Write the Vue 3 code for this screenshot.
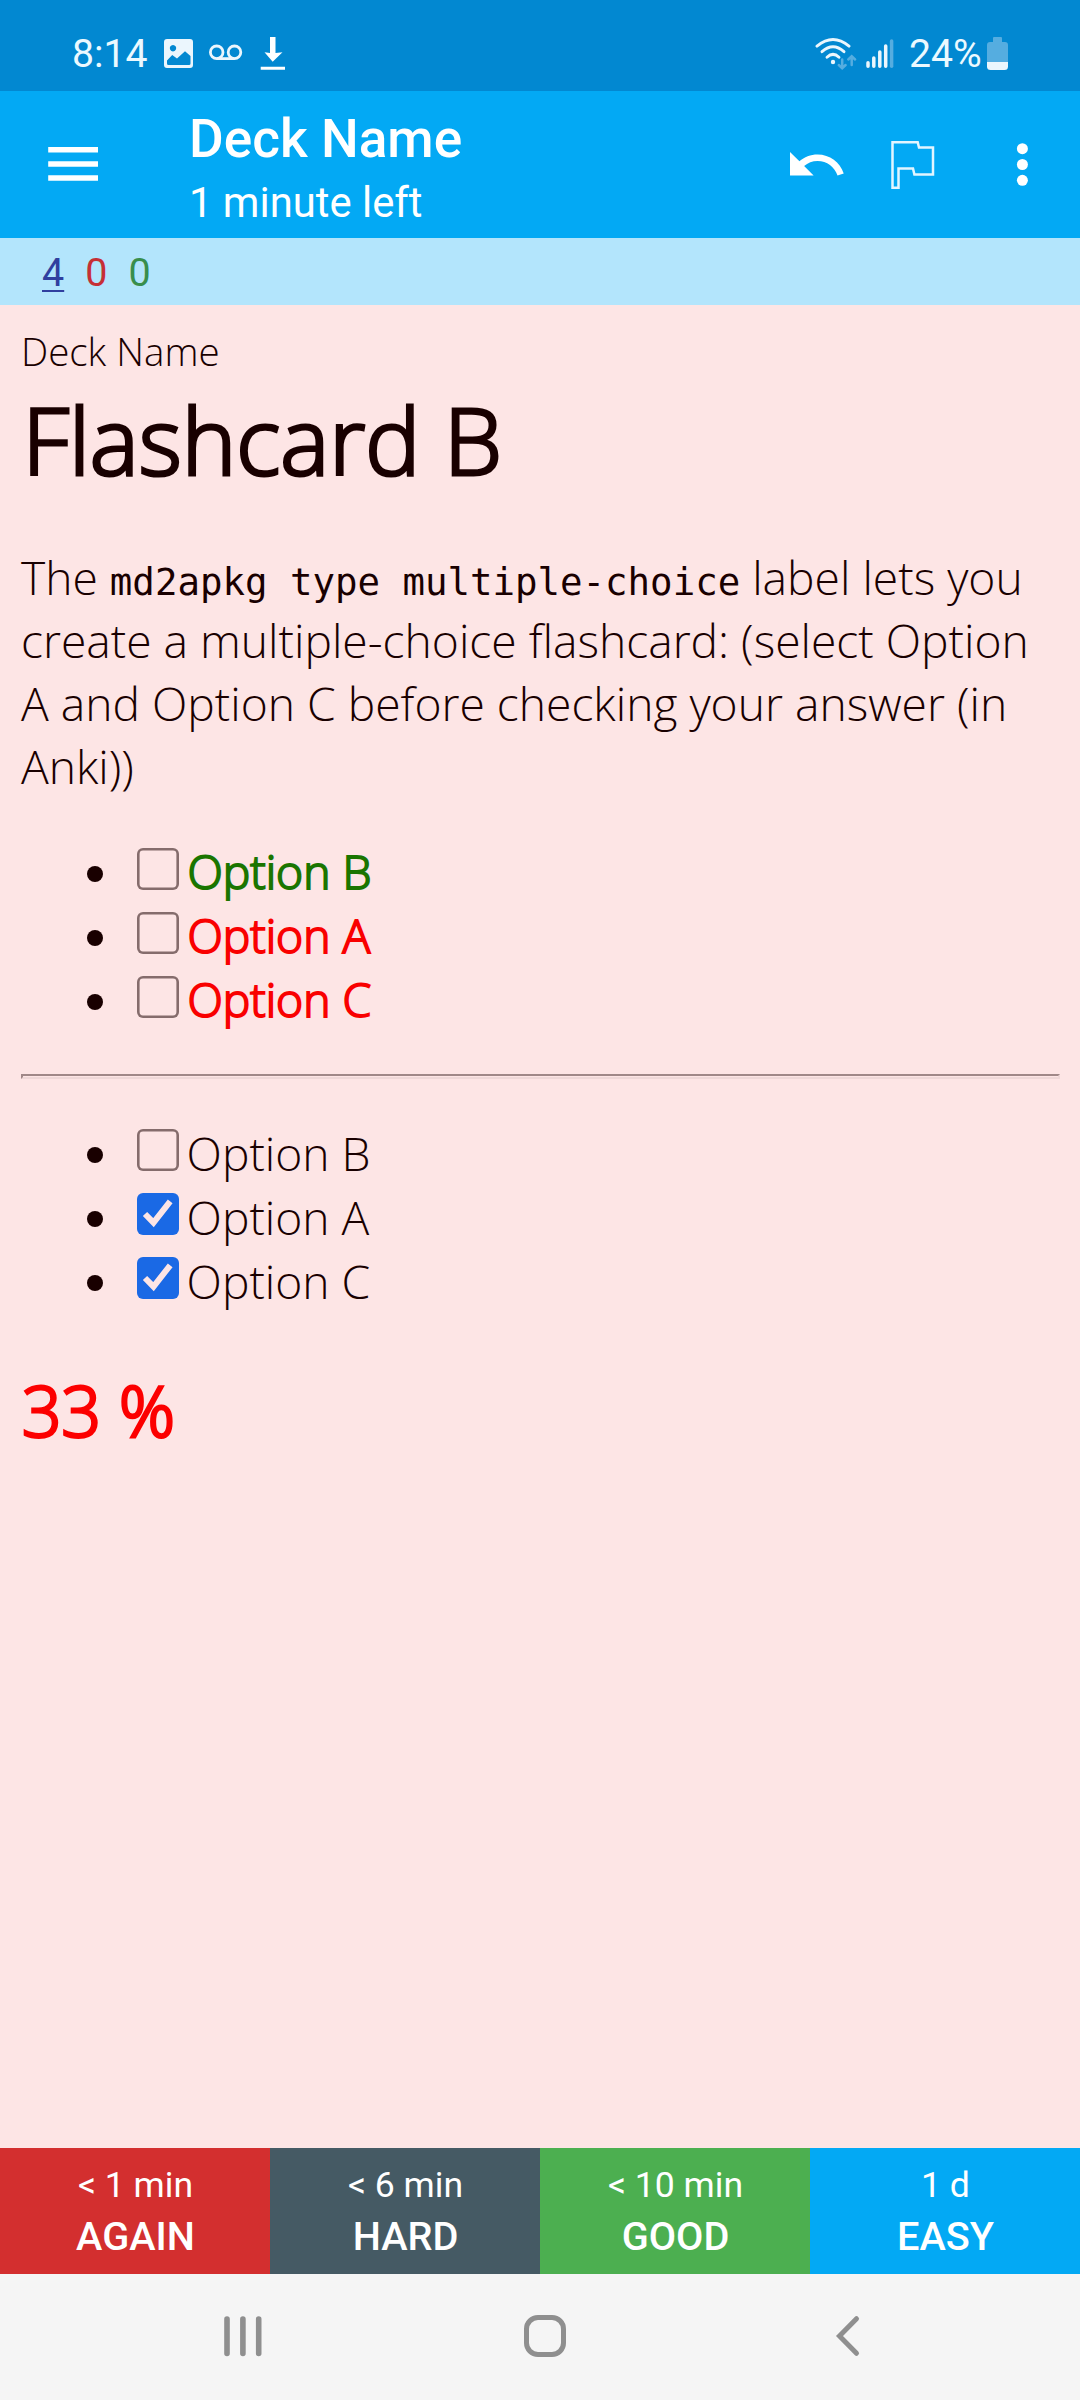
<script setup>
const counts = [
  { n: 4, kind: 'new' },
  { n: 0, kind: 'learn' },
  { n: 0, kind: 'review' },
]
const graded = [
  { text: 'Option B', kind: 'right' },
  { text: 'Option A', kind: 'wrong' },
  { text: 'Option C', kind: 'wrong' },
]
const chosen = [
  { text: 'Option B', checked: false },
  { text: 'Option A', checked: true },
  { text: 'Option C', checked: true },
]
const answers = [
  { time: '< 1 min', label: 'AGAIN', kind: 'again' },
  { time: '< 6 min', label: 'HARD', kind: 'hard' },
  { time: '< 10 min', label: 'GOOD', kind: 'good' },
  { time: '1 d', label: 'EASY', kind: 'easy' },
]
</script>

<template>
  <div class="screen">
    <header class="status">
      <span class="clock">8:14</span>
      <svg class="s-left" width="122" height="34" viewBox="163 38 122 34">
        <path fill-rule="evenodd" fill="#ebf6fd" d="M167 40h23a3 3 0 0 1 3 3v23a3 3 0 0 1-3 3h-23a3 3 0 0 1-3-3v-23a3 3 0 0 1 3-3zM173 46a3.2 3.2 0 1 0 .01 0zM167 61.500v3a1.500 1.500 0 0 0 1.500 1.500h20.500a1.500 1.500 0 0 0 1.500-1.500v-7.500l-5.500-4.800-8 7.300-4.800-3.600z" />
        <g fill="none" stroke="#ebf6fd" stroke-width="2.800">
          <circle cx="216.700" cy="53.300" r="6.300" />
          <circle cx="234.500" cy="53.300" r="6.300" />
          <path d="M216.700 59.600h17.800" />
        </g>
        <path fill="#fff" d="M270 38h5.500v16l7-.7-9.800 9.400-8.200-9.400 5.500.7zM260.700 67.700h24.500v3.100h-24.500z" />
      </svg>
      <svg class="s-right" width="79" height="34" viewBox="815 37 79 34">
        <g fill="none" stroke="#ebf6fd" stroke-width="2.900" stroke-linecap="round">
          <path d="M817 46.200Q833 33 849 46.200" />
          <path d="M822 51.700Q833 41.800 844 51.700" />
          <path d="M827 57.200Q833 51.500 839 57.200" />
        </g>
        <circle cx="833" cy="62" r="2.200" fill="#ebf6fd" />
        <g fill="none" stroke="#55ade0" stroke-width="2.500" stroke-linecap="round">
          <path d="M842.200 59.500v8.500M838.800 65l3.400 3.300 3.400-3.300M851.700 65v-8.500M848.300 59.500l3.400-3.300 3.400 3.300" />
        </g>
        <g stroke="#ebf6fd" stroke-width="3.500" stroke-linecap="round">
          <path d="M868 62.800v3.500M873.800 58v8.300M879.800 52v14.300M885.700 46v20.300" />
          <path stroke="#55ade0" d="M891.600 41v25.300" />
        </g>
      </svg>
      <span class="percent">24%</span>
      <svg class="batt" width="21" height="33" viewBox="987 37 21 33">
        <path fill="#55ade0" d="M994 37h7a1 1 0 0 1 1 1v4h3a3 3 0 0 1 3 3v17h-21v-17a3 3 0 0 1 3-3h3v-4a1 1 0 0 1 1-1z" />
        <path fill="#ebf6fd" d="M987 62h21v4.500a3.500 3.500 0 0 1-3.500 3.500h-14a3.500 3.500 0 0 1-3.500-3.500z" />
      </svg>
    </header>

    <div class="toolbar">
      <svg class="menu" width="50" height="37" viewBox="48 146 50 37">
        <path fill="#fff" d="M48.200 147h49.800v5.600h-49.800zM48.200 161.200h49.800v5.500h-49.800zM48.200 175.200h49.800v5.600h-49.800z" />
      </svg>
      <div class="titles">
        <div class="title">Deck Name</div>
        <div class="subtitle">1 minute left</div>
      </div>
      <svg class="actions" width="244" height="63" viewBox="785 133 244 63">
        <path fill="#fff" transform="translate(784.750 133.500) scale(2.625)" d="M12.500 8c-2.650 0-5.050.99-6.900 2.600L2 7v9h9l-3.620-3.620c1.390-1.160 3.160-1.880 5.120-1.880 3.540 0 6.550 2.310 7.600 5.500l2.370-.78C21.080 11.030 17.150 8 12.500 8z" />
        <path fill="none" stroke="#e2f5ff" stroke-width="2.500" d="M892.500 142.300h25.200l1.300 5.200h14v27h-18.600l-1.400-6h-14.500v19.300h-6z" />
        <g fill="#fff">
          <circle cx="1022.400" cy="148.700" r="5.500" />
          <circle cx="1022.400" cy="164.500" r="5.500" />
          <circle cx="1022.400" cy="180.300" r="5.500" />
        </g>
      </svg>
    </div>

    <div class="counts">
      <span v-for="(c, i) in counts" :key="i" :class="c.kind">{{ c.n }}</span>
    </div>

    <main class="card">
      <div class="deck">Deck Name</div>
      <h1>Flashcard B</h1>
      <p>The <code>md2apkg type multiple-choice</code> label lets you<br>create a multiple-choice flashcard: (select Option<br>A and Option C before checking your answer (in<br>Anki))</p>
      <ul>
        <li v-for="o in graded" :key="o.text">
          <i class="dot"></i><i class="box"></i><span class="strong" :class="o.kind">{{ o.text }}</span>
        </li>
      </ul>
      <div class="rule"></div>
      <ul class="chosen">
        <li v-for="o in chosen" :key="o.text">
          <i class="dot"></i>
          <svg v-if="o.checked" class="box on" viewBox="0 0 42 42">
            <path fill="none" stroke="#fde5e5" stroke-width="6" d="M8 21l8.500 8.600L33.200 8.300" />
          </svg>
          <i v-else class="box"></i>
          <span>{{ o.text }}</span>
        </li>
      </ul>
      <div class="score">33 %</div>
    </main>

    <div class="answers">
      <div v-for="a in answers" :key="a.label" class="answer" :class="a.kind">
        <span class="time">{{ a.time }}</span>
        <span class="label">{{ a.label }}</span>
      </div>
    </div>

    <nav>
      <svg width="640" height="46" viewBox="222 2313 640 46">
        <g fill="none" stroke="#8f8f8f" stroke-linecap="round">
          <path stroke-width="5.600" d="M227 2319v34.500M242.900 2319v34.500M258.700 2319v34.500" />
          <rect x="526.500" y="2317.500" width="37" height="37" rx="11.500" stroke-width="5" />
          <path stroke-width="5" d="M856.500 2318.700l-17 17.300 17 17.300" />
        </g>
      </svg>
    </nav>
  </div>
</template>

<style>
body { margin: 0; }
</style>

<style scoped>
.screen {
  width: 1080px;
  height: 2400px;
  display: flex;
  flex-direction: column;
  background: #fde5e5;
  font-family: Roboto, sans-serif;
  overflow: hidden;
}
svg { display: block; flex: none; }
.status {
  height: 91px;
  box-sizing: border-box;
  padding: 16px 72px 0 72px;
  display: flex;
  align-items: center;
  background: #0288d1;
  color: #ebf9ff;
  font-size: 39.200px;
  white-space: nowrap;
}
.clock { width: 91px; }
.s-right { margin-left: auto; }
.percent { width: 78px; margin-left: 15px; }
.toolbar {
  height: 147px;
  display: flex;
  align-items: center;
  background: #03a9f4;
  color: #fff;
}
.menu { margin-left: 48px; }
.titles { margin-left: 91px; padding-top: 6px; flex: 1; white-space: nowrap; }
.title { font-size: 53.200px; line-height: 62px; font-weight: 500; }
.subtitle { font-size: 41.800px; line-height: 50px; margin-top: 8px; }
.actions { margin-right: 51px; }
.counts {
  height: 67px;
  box-sizing: border-box;
  padding: 2px 0 0 42px;
  display: flex;
  align-items: center;
  gap: 21px;
  background: #b3e5fc;
  font-size: 39.500px;
}
.new { color: #303f9f; text-decoration: underline; text-decoration-thickness: 2px; text-underline-offset: 4px; }
.learn { color: #c62f35; }
.review { color: #388e4c; }
.card {
  flex: 1;
  padding: 20px 20px 0 21px;
  font-family: "Open Sans", "Noto Sans", sans-serif;
  font-weight: 300;
  font-size: 46.200px;
  color: #190000;
}
.deck { font-size: 38.500px; line-height: 52px; }
h1 {
  margin: 0;
  padding-left: 1.500px;
  font-size: 92.400px;
  line-height: 124px;
  font-weight: 300;
  -webkit-text-stroke: 3.200px #190000;
  white-space: nowrap;
}
p { margin: 44.500px 0 0; line-height: 63px; white-space: nowrap; }
code { font-family: "DejaVu Sans Mono", monospace; font-weight: 400; font-size: 37.400px; line-height: 1; }
ul { list-style: none; margin: 42px 0 0; padding: 0 0 0 66px; }
li { height: 64px; line-height: 64px; display: flex; white-space: nowrap; }
.dot { width: 16px; height: 16px; border-radius: 50%; background: #190000; margin-top: 26.500px; flex: none; }
.box {
  width: 42px;
  height: 42px;
  box-shadow: inset 0 0 0 2.600px #856c6c;
  border-radius: 6px;
  margin: 8.500px 7px 0 34px;
  flex: none;
}
.box.on { box-shadow: none; background: #1a69e5; }
.chosen { margin-top: 41px; }
.chosen span { padding: 2px 0 0 0.600px; }
.strong { padding-left: 1.400px; -webkit-text-stroke: 1.900px currentColor; }
.right { color: #1a7500; }
.wrong { color: #f90000; }
.rule {
  height: 1px;
  margin-top: 42.500px;
  border: 2px solid;
  border-color: #a08888 #efd8d8 #efd8d8 #a08888;
}
.score { margin-top: 51px; padding-left: 1px; font-size: 69.300px; line-height: 94px; color: #fc0000; -webkit-text-stroke: 3px #fc0000; }
.answers { height: 126px; display: flex; }
.answer {
  flex: 1;
  display: flex;
  flex-direction: column;
  align-items: center;
  color: #fff;
  padding: 15px 0 0 1px;
}
.time { font-size: 35.600px; line-height: 44px; }
.label { font-size: 39.700px; line-height: 50px; font-weight: 500; margin-top: 5px; }
.again { background: #d32f2f; }
.hard { background: #455a64; }
.good { background: #4caf50; }
.easy { background: #03a9f4; }
nav { height: 126px; box-sizing: border-box; padding: 39px 0 0 222px; background: #f5f5f5; }
</style>
